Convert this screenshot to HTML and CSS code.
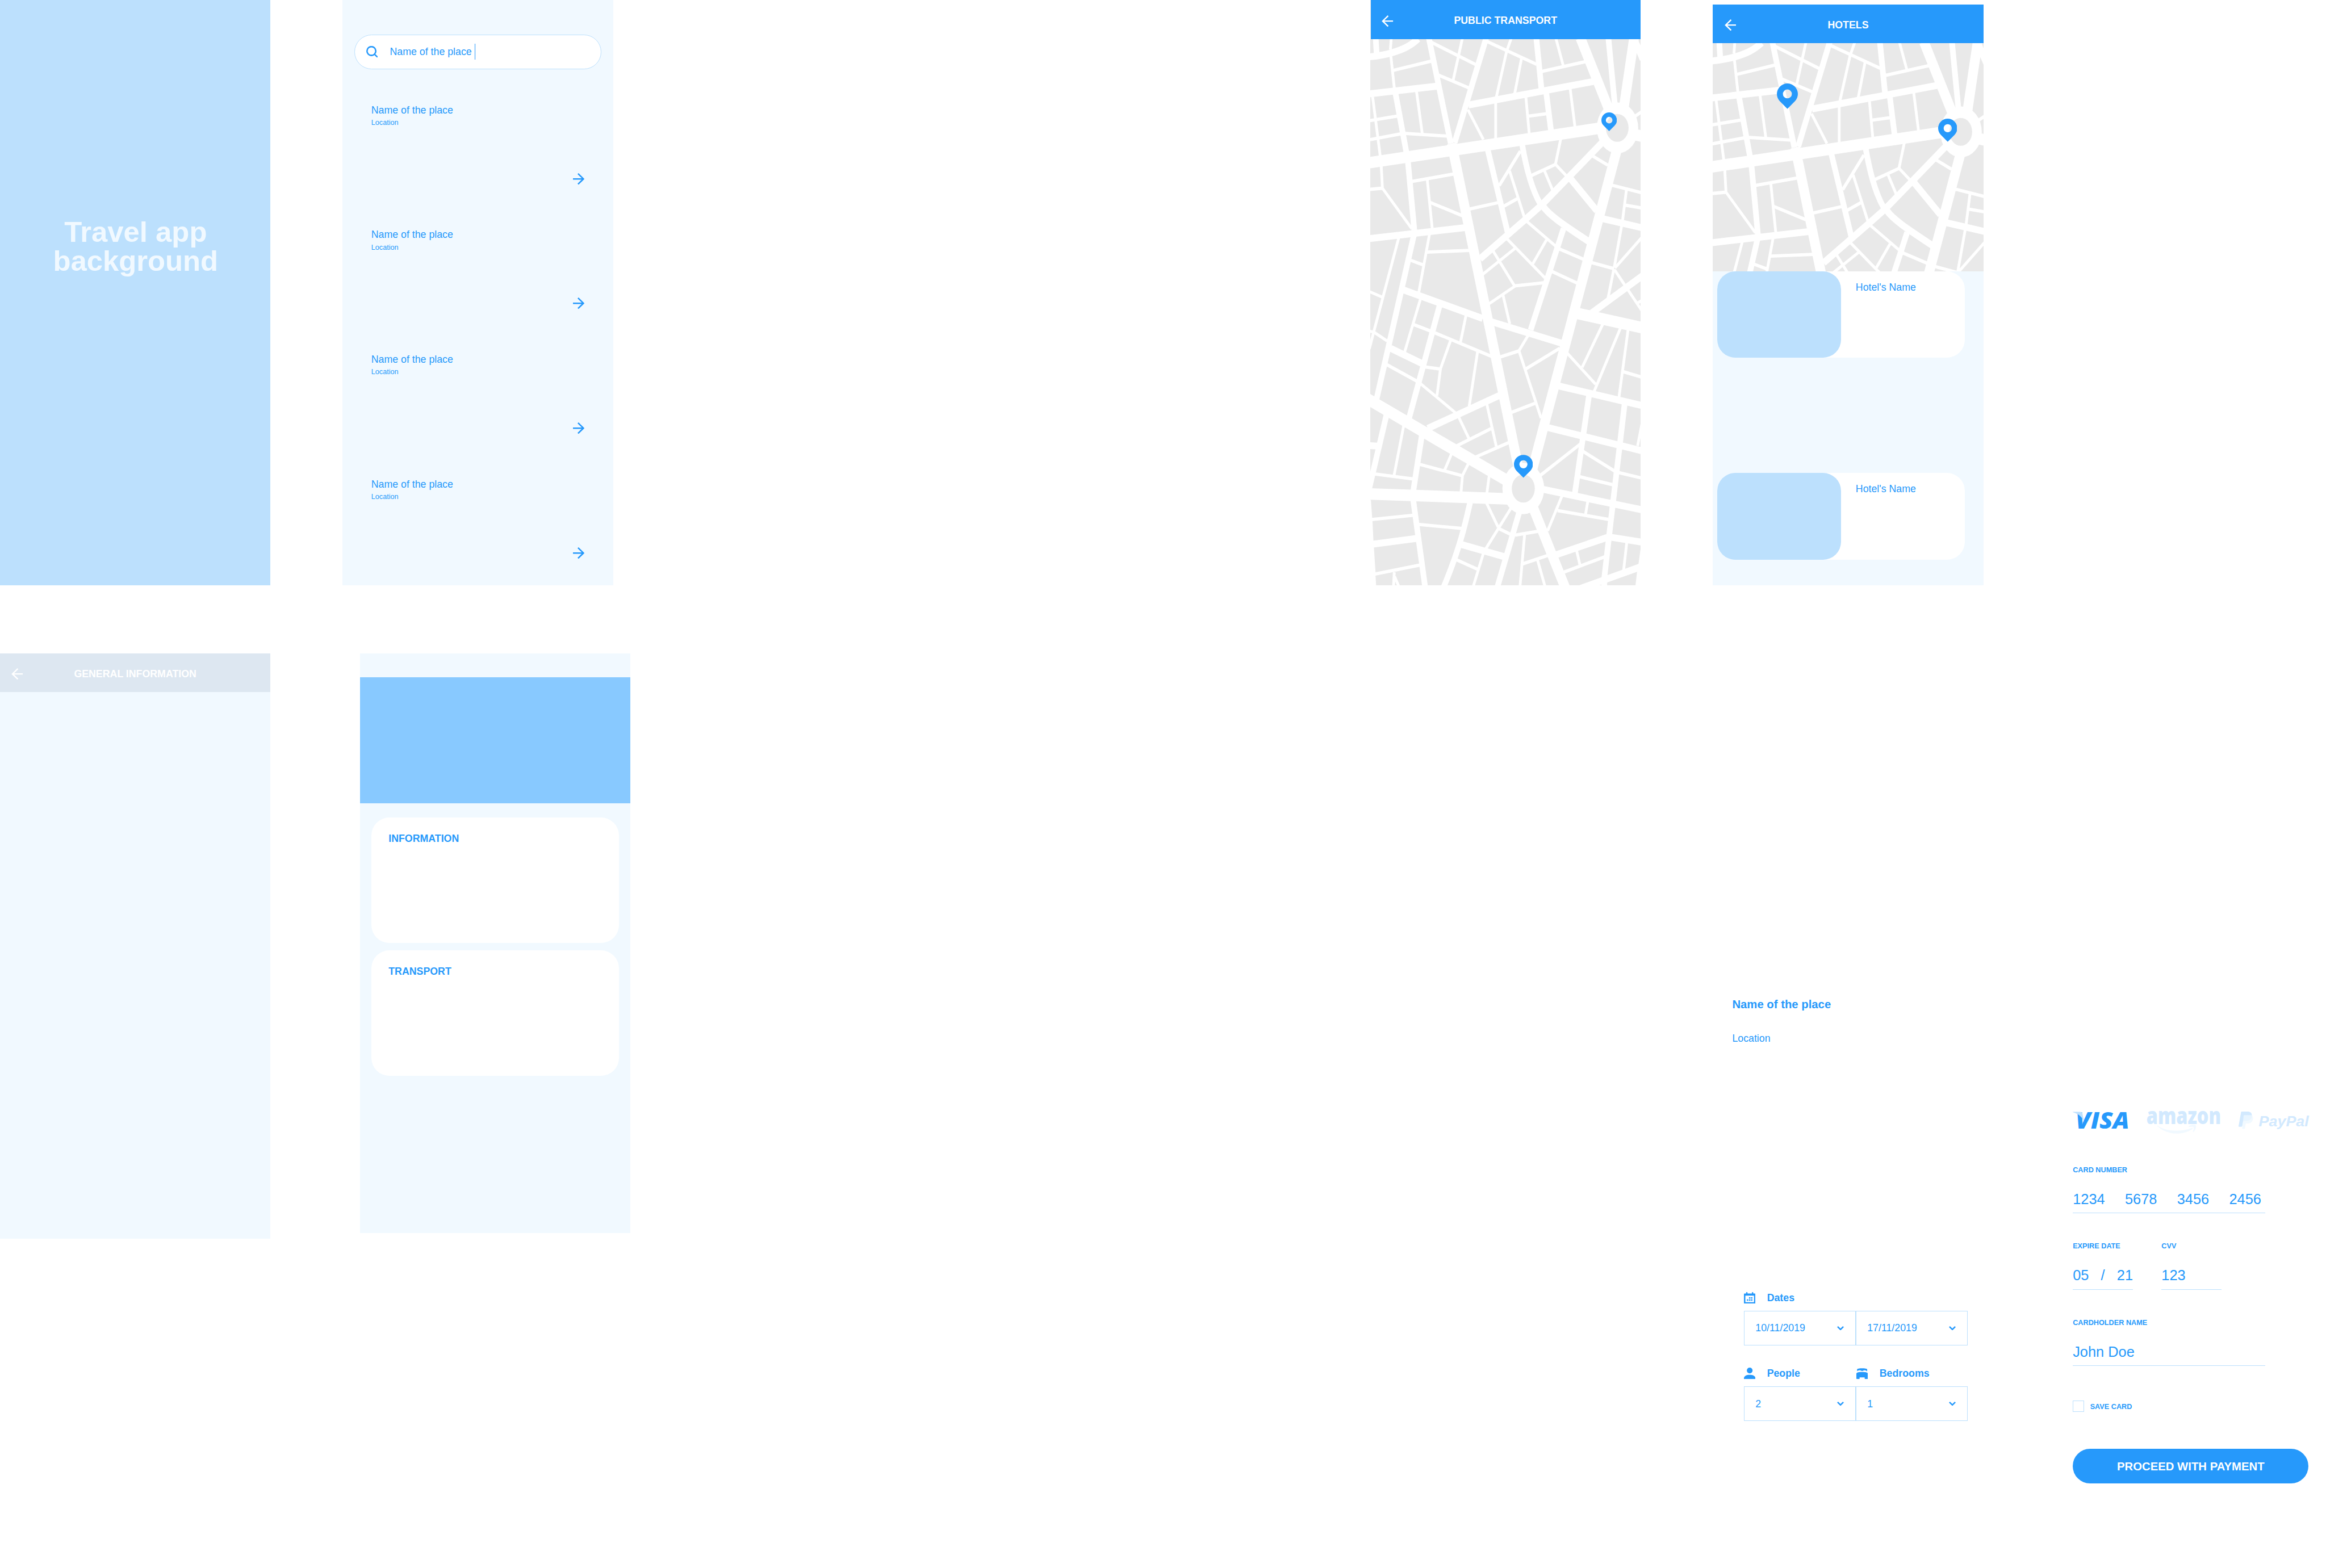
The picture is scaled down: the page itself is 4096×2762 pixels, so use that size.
FILE: index.html
```html
<!DOCTYPE html>
<html lang="en">
<head>
<meta charset="utf-8">
<title>Travel app</title>
<link rel="stylesheet" href="styles.css">
</head>
<body>
<svg class="defs" aria-hidden="true">
  <symbol id="back" viewBox="0 0 32 32"><path d="M18 1.4 3 16l15 14.600M3 16h29" fill="none" stroke="currentColor" stroke-width="3.800"/></symbol>
  <symbol id="next" viewBox="0 0 32 32"><path d="M14 1.400 29 16 14 30.600M29 16H0" fill="none" stroke="currentColor" stroke-width="4"/></symbol>
  <symbol id="search" viewBox="0 0 32 32"><circle cx="14.200" cy="14" r="12.200" fill="none" stroke="currentColor" stroke-width="4"/><path d="m23 23 8 8" stroke="currentColor" stroke-width="4"/></symbol>
  <symbol id="pin" viewBox="0 0 53 64"><path fill="currentColor" fill-rule="evenodd" d="M26.500 64 7.760 45.240a26.500 26.500 0 1 1 37.480 0ZM26.500 15.200a11.300 11.300 0 1 0 0 22.600 11.300 11.300 0 0 0 0-22.600Z"/></symbol>
  <symbol id="chevron" viewBox="0 0 19 12"><path d="M1.500 1.500 9.500 9.200l8-7.700" fill="none" stroke="currentColor" stroke-width="4"/></symbol>
  <symbol id="calendar" viewBox="0 0 32 32"><path fill="currentColor" fill-rule="evenodd" d="M6 4V2q0-2 2-2t2 2v2h12V2q0-2 2-2t2 2v2h4q2 0 2 2v24q0 2-2 2H2q-2 0-2-2V6q0-2 2-2ZM4 10v18h24V10Zm10 4h4v4h-4Zm5.600 0h4v4h-4ZM8 20h4v4H8Zm6 0h4v4h-4Zm5.600 0h4v4h-4Z"/></symbol>
  <symbol id="person" viewBox="0 0 32 32"><path fill="currentColor" d="M16 0a8 8 0 1 1 0 16 8 8 0 0 1 0-16ZM0 32v-2c0-7 7-10 16-10s16 3 16 10v2Z"/></symbol>
  <symbol id="bed" viewBox="0 0 32 32"><path fill="currentColor" d="M2 10V5c0-2 7-3 14-3s14 1 14 3v5.500C27 7.300 22 7.300 20 8q-4 3-8 0C9 7 4 8 2 10ZM0 17c0-4 8-4.700 16-4.700S32 13 32 17v13q0 2-2 2h-5q-2 0-2-2v-3H9v3q0 2-2 2H2q-2 0-2-2Z"/></symbol>

  <symbol id="city" viewBox="20.360 206.500 1527.300 2899" preserveAspectRatio="none" overflow="visible">
    <!-- avenues -->
    <g class="road" stroke-width="61">
      <path d="M0 864 1300 681 1400 667M1460 702l100 20"/>
      <path d="M1180 1659l380 79M0 2112 840 2574M0 2618l830 28" />
    </g>
    <g class="road" stroke-width="55">
      <path d="M480 760 857 2480M1207 200l157 370M1510 200l-58 370M1418 775 930 2510M925 2656l198 464"/>
    </g>
    <!-- streets -->
    <g class="road" stroke-width="36.500">
      <path d="M0 302C60 296 100 290 140 279c60-17 105-34 150-74M1508 200l52 113"/>
      <path d="M10 497 395 456M575 556l705-125M1335 1159l225 49M10 1265l545-59M200 1534l455 154M700 1704l400 115"/>
      <path d="M1360 725 1142 937 988 1086 892 1166 640 1372M998 1095c32 45 112 95 257 185M1150 945l150 172M1565 1456l-305 210"/>
      <path d="M135 1846l175 80M750 2096 345 2271M10 2362l50 3M30 2886l250-31M535 2887l240 64"/>
      <path d="M980 2591l580 113M1080 2045l480 106M1020 2266l540 125M1065 2943l297-95M1370 2847l190 28M1560 3001l-370 125"/>
    </g>
    <g class="road" stroke-width="32">
      <path d="M51 200l5 80M351 200l124 560M675 200 497 755M958 200l29 270 27 20 27 202M1365 200l37 360M163 495l62 315M233 855l36 365M683 790l114 445M877 760c18 100 48 230 103 320M267 1245 50 2140M1112 1210 926 1749"/>
      <path d="M412 1619 240 2214M112 2199 8 2615M311 2311l-47 288M262 2644l69 475M584 2664c-24 100-54 235-150 450M862 2714l-126 405M1256 2094l-80 520M1457 2139l-64 510-23 185-28 230v55"/>
    </g>
    <!-- lanes running across -->
    <g class="road" stroke-width="17.500">
      <path d="M150 372l215-49M365 223l250 118M405 397l172 68M680 219l280 121M988 378l247-52M1505 622l55-35M10 640l165-26M10 741l185-33M210 706l250 15M912 615l103-13M575 1109l170-36M10 1004l79-7M255 961l235-39M355 1071l185 72M248 1379l72 25M340 1336l240-9M1272 824l90 51M930 930l136-59M868 800 748 984M770 1095l80-42M1385 981l175 42M1460 1087l100 16M1268 1391l130 33M835 1515l165-16M1045 1438l145 63M1088 1319l137 55"/>
      <path d="M748 1894l112-34M815 2187l135-49M898 1956l192-110M262 1719l98 35M385 1764l320 125M330 1945l82 11M110 1931l175 90M510 2363l193-91M615 2423l188-77M45 2513l217 26M300 2462l240 60M20 2755l242-23M40 3045l260-49M290 2780l250 22M748 2803l64 30M508 2968l117 50M838 2837l130-20M880 2990l142-45M1078 2707l287 47M980 2521l225-166M1222 2393l178 104M1202 2527l188 43M1422 2505l138 31M1448 1970l112 31M1112 3034l233-82"/>
    </g>
    <!-- lanes running down -->
    <g class="road" stroke-width="15.600">
      <path d="M139 200l-5 62M136 290l20 175M541 200l-52 222M817 200l-27 72-58 243M875 305l-39 190M1068 200l42 147M32 500l45 330M281 480l33 228M572 581l87 158M728.500 540v195M899 512l19 196M1149 468l27 202M82 875l7 122 166 215M342 950l28 260M1096 735l-30 135 62 62M1003 902l47 105M807 905l83 245M903 1172l165 133M1015 1272l-77 126M793 1266l215 208M714 1330l121 185M650 1458l188-142M838 1516l-148 95M770 1564l38 153M1467 1005l-22 163M1440 1195l-42 223M1402 1420l158-168M1396 1425l-34 160M1400 1430l160 225M1530 1606l30-17M181 1260 42 1752l-27 97M355 1240l-61 312M10 1543l78 32"/>
      <path d="M15 1755l27 6 73 46M304 1584l-90 283M912 1777l-52 82 125 358M474 1804l-57 150-20 143M303 2033l197 154M561 1671l-31 142M626 1866l-47 288M521 2213l56 111M679 2144l53 223M209 2257l-54 262M480 2404l-39 87M574 2459l-33 62-8 88M692 2522l-13 92M156 3034l-5 85M158 3057l30 67M677 2667l65 127M815 2694 673 2909M658 2937l-56 172M892 2834l-27 285M965 2969l45 150M1103 2629l-81 185M1249 2657l-13 70M1530 2364l26-125M1333 1719l-116 228M1130 1869l163 168M1433 1739l-148 335M1476 1749l-51 356M1186 2921l18 73M1469 2874l-18 150"/>
    </g>
    <!-- roundabouts -->
    <g class="plaza"><ellipse cx="1416.500" cy="677.500" rx="117" ry="135"/><ellipse cx="884.500" cy="2590" rx="118" ry="136"/></g>
    <g class="green"><ellipse cx="1415" cy="677" rx="64" ry="74"/><ellipse cx="884.500" cy="2590" rx="65" ry="74.500"/></g>
    <!-- edges of the mapped area -->
    <g class="plaza"><path d="M0 2650h24l7 94 2 20 5 101 3 38 9 131v19l4 60H0ZM1560 2895h-11l-14 95-8 42-10 80h43Z"/></g>
  </symbol>
</svg>

<main class="board">
  <div class="row">
    <section class="screen splash"><h1>Travel app background</h1></section>

    <section class="screen finder">
      <div class="searchbox">
        <svg class="icon"><use href="#search"/></svg>
        <span class="query">Name of the place</span><span class="caret"></span>
      </div>
      <ul class="places">
        <li><h2>Name of the place</h2><p>Location</p><svg class="icon"><use href="#next"/></svg></li>
        <li><h2>Name of the place</h2><p>Location</p><svg class="icon"><use href="#next"/></svg></li>
        <li><h2>Name of the place</h2><p>Location</p><svg class="icon"><use href="#next"/></svg></li>
        <li><h2>Name of the place</h2><p>Location</p><svg class="icon"><use href="#next"/></svg></li>
      </ul>
    </section>

    <section class="screen transport">
      <header class="bar"><svg class="icon"><use href="#back"/></svg><h2>PUBLIC TRANSPORT</h2></header>
      <div class="map">
        <svg class="city"><use href="#city"/></svg>
        <svg class="pin pin-square"><use href="#pin"/></svg>
        <svg class="pin pin-south"><use href="#pin"/></svg>
      </div>
    </section>

    <section class="screen hotels">
      <header class="bar"><svg class="icon"><use href="#back"/></svg><h2>HOTELS</h2></header>
      <div class="map">
        <svg class="city"><use href="#city"/></svg>
        <svg class="pin pin-west"><use href="#pin"/></svg>
        <svg class="pin pin-east"><use href="#pin"/></svg>
      </div>
      <div class="hotel-list">
        <article class="hotel"><div class="photo"></div><h3>Hotel's Name</h3></article>
        <article class="hotel"><div class="photo"></div><h3>Hotel's Name</h3></article>
      </div>
    </section>
  </div>

  <div class="row second">
    <section class="screen general">
      <header class="bar"><svg class="icon"><use href="#back"/></svg><h2>GENERAL INFORMATION</h2></header>
    </section>

    <section class="screen overview">
      <div class="banner"></div>
      <article class="card"><h3>INFORMATION</h3></article>
      <article class="card"><h3>TRANSPORT</h3></article>
    </section>

    <section class="stay">
      <h2>Name of the place</h2>
      <p>Location</p>
      <form class="booking">
        <div class="legend wide"><svg class="icon"><use href="#calendar"/></svg><span>Dates</span></div>
        <div class="select"><span>10/11/2019</span><svg class="chevron"><use href="#chevron"/></svg></div>
        <div class="select"><span>17/11/2019</span><svg class="chevron"><use href="#chevron"/></svg></div>
        <div class="legend later"><svg class="icon"><use href="#person"/></svg><span>People</span></div>
        <div class="legend later inset"><svg class="icon"><use href="#bed"/></svg><span>Bedrooms</span></div>
        <div class="select"><span>2</span><svg class="chevron"><use href="#chevron"/></svg></div>
        <div class="select"><span>1</span><svg class="chevron"><use href="#chevron"/></svg></div>
      </form>
    </section>

    <section class="payment">
      <div class="brands">
        <svg class="visa" viewBox="0 0 156 61">
          <text class="visa-name" x="8" y="47" textLength="149" lengthAdjust="spacingAndGlyphs">VISA</text>
          <path class="flick" d="M0 .8h20q6 .2 7 5l5 26C29 18 19 7 0 1.500Z"/>
        </svg>
        <svg class="amazon" viewBox="0 0 203 61">
          <text class="amazon-name" x="-2" y="35.300" textLength="207" lengthAdjust="spacingAndGlyphs">amazon</text>
          <path class="smile" d="M28 38.500C45 50 63 53 82 53s34-4 43-8q3 0 1 3c-12 9-29 13-44 13-22 0-41-9-54-21ZM116 40c6-4 17-4 19-2 2 5-1 15-7 18.500q-2 0-1-2c2-5 3-9 2-11-2-2-9-1-13-.5q-2-1 0-3Z"/>
        </svg>
        <svg class="paypal" viewBox="0 0 195 61">
          <path class="mark-back" d="M7 1.500Q7.200 0 9 0h15c9 0 13 4 13 11 0 9-6 15-16 15h-6q-2 0-2.400 2L10 40.500Q9.800 42 8 42H1q-1 0-1-1.500Z"/>
          <path class="mark-front" d="M14 12q.3-2 2-2h19.500q4.500 3 4.500 8.500C40 28 34 33 26 33h-4q-2 0-2.400 2L18 46q-.3 2-2 2h-5q-1 0-1-1.500Z"/>
          <text class="paypal-name" x="56" y="40.300" textLength="139" lengthAdjust="spacingAndGlyphs">PayPal</text>
        </svg>
      </div>
      <div class="fields">
        <div class="field"><label>CARD NUMBER</label><div class="value">1234     5678     3456     2456</div></div>
        <div class="pair">
          <div class="field short"><label>EXPIRE DATE</label><div class="value">05   /   21</div></div>
          <div class="field short"><label>CVV</label><div class="value">123</div></div>
        </div>
        <div class="field"><label>CARDHOLDER NAME</label><div class="value">John Doe</div></div>
      </div>
      <div class="save"><span class="box"></span><span class="save-label">SAVE CARD</span></div>
      <div class="pay">PROCEED WITH PAYMENT</div>
    </section>
  </div>
</main>
</body>
</html>
```
FILE: styles.css
```css
:root {
  font-size: 6.3504px;
  --blue: #2699fb;
  --sky: #bce0fd;
  --mist: #f1f9ff;
  --block: #e9e9e9;
}

* { box-sizing: border-box; margin: 0; padding: 0; }

body {
  background: #fff;
  color: var(--blue);
  font-family: "Liberation Sans", Arial, sans-serif;
  font-size: 2.8rem;
  line-height: 1;
  overflow: hidden;
}

h1, h2, h3 { font-size: inherit; font-weight: inherit; }
svg { display: block; }
.defs { position: absolute; width: 0; height: 0; }

.board { width: 645rem; height: 434.9rem; overflow: hidden; }
.row { display: flex; align-items: flex-start; height: 162.4rem; }
.second { margin-top: 18.8rem; height: auto; }
.screen { width: 75rem; height: 162.4rem; flex: none; overflow: hidden; background: var(--mist); }
.icon { width: 3.2rem; height: 3.2rem; flex: none; }

/* Header bar shared by the inner screens */
.bar {
  display: grid;
  grid-template-columns: 3.2rem 1fr 3.2rem;
  align-items: center;
  height: 10.8rem;
  padding: .8rem 3.2rem 0;
  background: var(--blue);
  color: #fff;
}
.bar h2 { font-weight: 700; text-align: center; white-space: nowrap; }

/* Splash */
.splash { background: var(--sky); color: var(--mist); padding: 60.5rem 12rem 0 12.2rem; }
.splash h1 { font-size: 8rem; font-weight: 700; text-align: center; }

/* Search */
.finder { margin-left: 20rem; padding-top: 9.6rem; }
.searchbox {
  display: flex;
  align-items: center;
  width: 68.6rem;
  height: 9.6rem;
  margin-left: 3.2rem;
  padding-left: 3.16rem;
  border: .2rem solid var(--sky);
  border-radius: 4.8rem;
  background: #fff;
}
.query { margin-left: 3.4rem; padding-top: .3rem; }
.caret { width: .2rem; height: 4.4rem; margin-left: .76rem; background: var(--blue); }
.places { list-style: none; display: grid; gap: 12.63rem; margin: 10.03rem 7.95rem 0 7.94rem; }
.places p { font-size: 2rem; margin-top: 1.06rem; }
.places .icon { margin: 12.91rem 0 0 auto; }

/* Maps */
.map { position: relative; overflow: hidden; background: var(--block); }
.city { width: 75rem; height: 151.6rem; overflow: visible; }
.road { fill: none; stroke: #fff; stroke-linejoin: round; }
.plaza { fill: #fff; }
.green { fill: var(--block); }
.pin { position: absolute; }

.transport { margin-left: 210rem; background: var(--block); }
.transport .bar { margin-left: .2rem; padding-left: 3rem; }
.transport .map { height: 151.6rem; }
.pin-square { left: 64.02rem; top: 20.42rem; width: 4.3rem; height: 5.2rem; }
.pin-south { left: 39.82rem; top: 115.4rem; width: 5.26rem; height: 6.4rem; }

.hotels { margin: 1.2rem 0 0 20rem; height: 161.2rem; }
.hotels .map { height: 63.2rem; padding-left: .2rem; }
.pin-west { left: 17.8rem; top: 11.2rem; width: 5.83rem; height: 7.03rem; }
.pin-east { left: 62.42rem; top: 20.97rem; width: 5.3rem; height: 6.4rem; }
.hotel-list { display: grid; gap: 32rem; padding-left: 1.2rem; }
.hotel { display: flex; width: 68.6rem; height: 24rem; border-radius: 5rem; background: #fff; }
.photo { width: 34.4rem; border-radius: 5rem; background: var(--sky); }
.hotel h3 { margin: 3.2rem 0 0 4rem; }

/* General information, header disabled */
.general .bar { background: #dde7f1; }

/* Overview */
.overview { margin-left: 24.8rem; height: 160.8rem; padding-top: 6.6rem; }
.banner { height: 35rem; background: #88c9ff; margin-bottom: 4rem; }
.card { width: 68.6rem; height: 34.8rem; margin: 0 0 2rem 3.2rem; padding: 4.6rem 0 0 4.75rem; border-radius: 5rem; background: #fff; }
.card h3 { font-weight: 700; }

/* Stay and booking form */
.stay { width: 65.25rem; margin-left: 305.55rem; padding-top: 95.74rem; flex: none; }
.stay h2 { font-size: 3.2rem; font-weight: 700; }
.stay p { margin-top: 6.64rem; }
.booking { display: grid; grid-template-columns: 31rem 31rem; margin: 68.82rem 0 0 3.25rem; }
.wide { grid-column: 1 / -1; }
.legend { display: flex; align-items: center; gap: 3.2rem; height: 3.2rem; margin-bottom: 2rem; font-weight: 700; }
.legend span, .select span { padding-top: .3rem; }
.later { margin-top: 6.2rem; }
.inset { padding-left: .2rem; }
.select {
  display: flex;
  align-items: center;
  justify-content: space-between;
  height: 9.6rem;
  padding: 0 3.1rem 0 3.05rem;
  border: .2rem solid var(--sky);
}
.chevron { width: 1.9rem; height: 1.2rem; }

/* Payment */
.payment { width: 65.5rem; margin-left: 29.2rem; padding-top: 127.2rem; flex: none; }
.brands { display: flex; justify-content: space-between; height: 6.1rem; }
.brands svg { height: 6.1rem; overflow: visible; }
.visa { width: 15.6rem; }
.amazon { width: 20.3rem; }
.paypal { width: 19.5rem; }
.visa-name { font: italic 800 65px "Open Sans", sans-serif; fill: var(--blue); }
.flick { fill: var(--sky); }
.amazon-name { font: 800 65px "Open Sans", sans-serif; fill: #d2e9fe; }
.smile { fill: var(--mist); }
.paypal-name { font: italic 700 42px "Liberation Sans", sans-serif; fill: #d2e9fe; }
.mark-back { fill: #d2e9fe; }
.mark-front { fill: #edf7ff; fill-opacity: .8; }

.fields { display: grid; gap: 8.11rem; margin-top: 9.01rem; }
.field { width: 53.4rem; }
.pair { display: flex; gap: 8rem; }
.short { width: 16.6rem; }
.field label { display: block; padding-top: .1rem; font-size: 2rem; font-weight: 700; white-space: nowrap; }
.value { margin-top: 5.1rem; padding-bottom: 1.69rem; border-bottom: .2rem solid var(--sky); font-size: 4rem; white-space: pre; }
.save { display: flex; align-items: center; gap: 1.6rem; margin-top: 9.6rem; font-size: 2rem; font-weight: 700; }
.box { width: 3.2rem; height: 3.2rem; border: .2rem solid var(--sky); }
.save-label { padding-top: .5rem; }
.pay {
  display: grid;
  place-items: center;
  width: 65.4rem;
  height: 9.6rem;
  margin-top: 10.2rem;
  padding-top: .3rem;
  border-radius: 4.8rem;
  background: var(--blue);
  color: #fff;
  font-size: 3.2rem;
  font-weight: 700;
}
```
